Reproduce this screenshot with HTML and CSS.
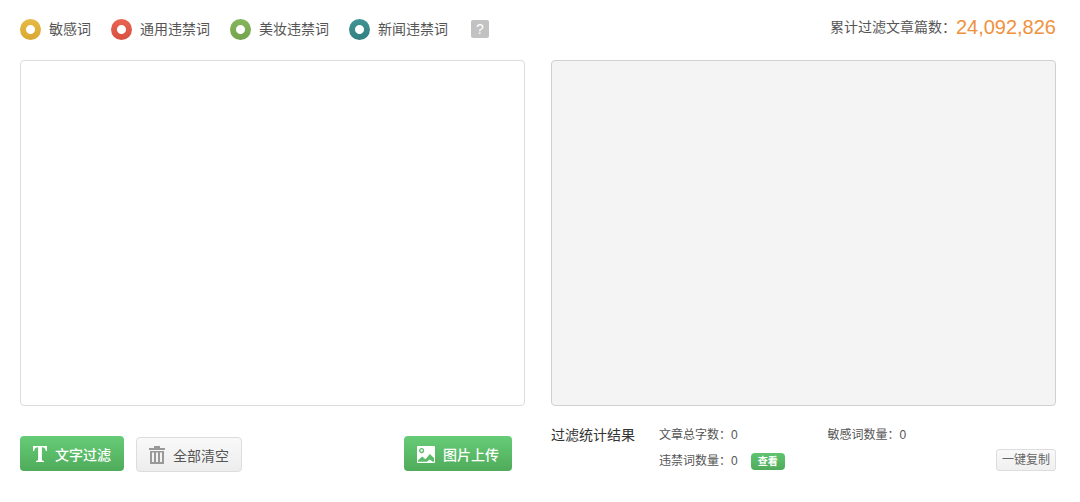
FILE: index.html
```html
<!DOCTYPE html>
<html lang="zh-CN">
<head>
    <meta charset="UTF-8">
    <title>敏感词过滤</title>
    <link rel="stylesheet" href="styles.css">
</head>
<body>
    <div class="container">
        <div class="top-bar">
            <ul class="legend">
                <li><span class="ring yellow"></span>敏感词</li>
                <li><span class="ring red"></span>通用违禁词</li>
                <li><span class="ring green"></span>美妆违禁词</li>
                <li><span class="ring teal"></span>新闻违禁词</li>
            </ul>
            <button type="button" class="help">?</button>
            <p class="total">累计过滤文章篇数：<strong>24,092,826</strong></p>
        </div>

        <div class="columns">
            <textarea class="box" id="source" aria-label="文章内容"></textarea>
            <textarea class="box box-result" id="result" aria-label="过滤结果" readonly></textarea>

            <div class="actions">
                <button type="button" class="btn btn-green">
                    <svg width="14" height="16" viewBox="0 0 14 16" fill="#fff">
                        <path d="M0 0H14V5H12.8C12.4 2.6 11.6 1.3 9.2 1.3H8.9V13C8.9 14.4 9.4 14.7 11 14.9V16H3V14.9C4.6 14.7 5.1 14.4 5.1 13V1.3H4.8C2.4 1.3 1.6 2.6 1.2 5H0Z"/>
                    </svg>
                    文字过滤
                </button>
                <button type="button" class="btn btn-gray">
                    <svg width="16" height="18" viewBox="0 0 16 18" fill="#999">
                        <path d="M5 0h6v2h5v2H0V2h5z"/>
                        <path fill-rule="evenodd" d="M1 5h14v13H1zM3 6.5v9.5h2v-9.5zM7 6.5v9.5h2v-9.5zM11 6.5v9.5h2v-9.5z"/>
                    </svg>
                    全部清空
                </button>
                <button type="button" class="btn btn-green upload">
                    <svg width="18" height="17" viewBox="0 0 18 17">
                        <rect width="18" height="17" rx="1" fill="#fff"/>
                        <circle cx="4.6" cy="4.6" r="1.9" fill="none" stroke="#5cbb6b" stroke-width="1.3"/>
                        <path d="M1 15.8V14.2L5.2 10.6L8.4 13.2L10.4 11L12.8 8L17 12V15.8H15.8L12.6 13.4L10 15.8Z" fill="#5cbb6b"/>
                    </svg>
                    图片上传
                </button>
            </div>

            <div class="stats">
                <h2>过滤统计结果</h2>
                <ul class="counts">
                    <li>文章总字数：0</li>
                    <li>敏感词数量：0</li>
                    <li>违禁词数量：0<button type="button" class="view">查看</button></li>
                </ul>
                <button type="button" class="copy">一键复制</button>
            </div>
        </div>
    </div>
</body>
</html>
```
FILE: styles.css
```css
* {
    box-sizing: border-box;
}

body {
    margin: 0;
    background-color: #fff;
    color: #555;
    font-family: "Liberation Sans", "Noto Sans CJK SC", sans-serif;
    font-size: 14px;
    line-height: 20px;
}

ul, p, h2 {
    margin: 0;
    padding: 0;
    list-style: none;
}

button {
    font-family: inherit;
    cursor: pointer;
}

.container {
    padding: 16px 24px 16px 20px;
}

/* top bar */
.top-bar {
    display: flex;
    align-items: flex-start;
    height: 44px;
}

.legend {
    display: flex;
    gap: 20px;
    padding-top: 3px;
}

.legend li {
    display: flex;
    align-items: flex-start;
    gap: 8px;
}

.ring {
    width: 21px;
    height: 21px;
    border-radius: 50%;
}

.yellow {
    background: radial-gradient(circle, #fff 4px, transparent 5px), linear-gradient(#e5bb45, #d9a732);
}

.red {
    background: radial-gradient(circle, #fff 4px, transparent 5px), linear-gradient(#e86452, #d84f40);
}

.green {
    background: radial-gradient(circle, #fff 4px, transparent 5px), linear-gradient(#86b75c, #74a24c);
}

.teal {
    background: radial-gradient(circle, #fff 4px, transparent 5px), linear-gradient(#409495, #327f80);
}

.help {
    width: 18px;
    height: 18px;
    margin: 4px 0 0 23px;
    padding: 0;
    border: none;
    border-radius: 2px;
    background-color: #c2c2c2;
    color: #fff;
    font-size: 14px;
    line-height: 18px;
}

.total {
    display: flex;
    align-items: center;
    margin-left: auto;
    line-height: 22px;
}

.total strong {
    color: #f0923c;
    font-size: 20px;
    font-weight: normal;
}

/* text boxes and what stands below them */
.columns {
    display: grid;
    grid-template-columns: 1fr 1fr;
    column-gap: 26px;
}

.box {
    display: block;
    width: 100%;
    height: 346px;
    padding: 10px;
    border: 1px solid #ddd;
    border-radius: 4px;
    background-color: #fff;
    font: inherit;
    resize: none;
    outline: none;
}

.box-result {
    border-color: #d0d0d0;
    background-color: #f4f4f4;
}

.actions {
    display: flex;
    align-items: flex-start;
    gap: 12px;
    padding: 30px 13px 0 0;
}

.btn {
    display: flex;
    align-items: center;
    gap: 8px;
    height: 35px;
    padding: 1px 13px 0;
    border: none;
    border-radius: 4px;
    font-size: 14px;
}

.btn-green {
    background: linear-gradient(#66cc77, #4fab5a);
    color: #fff;
    font-weight: 500;
}

.btn-gray {
    margin-top: 1px;
    padding: 0 12px;
    border: 1px solid #ddd;
    background: linear-gradient(#f9f9f9, #ededed);
    color: #555;
}

.upload {
    margin-left: auto;
}

.stats {
    display: flex;
    align-items: flex-start;
    padding-top: 19px;
}

.stats h2 {
    width: 108px;
    color: #333;
    font-size: 14px;
    font-weight: normal;
}

.counts {
    display: grid;
    flex: 1;
    grid-template-columns: 1fr 1fr;
    row-gap: 6px;
    font-size: 12px;
}

.counts li {
    display: flex;
    align-items: center;
}

.view {
    height: 17px;
    margin-left: 13px;
    padding: 0 7px;
    border: none;
    border-radius: 4px;
    background: linear-gradient(#5fc470, #4fab5a);
    color: #fff;
    font-size: 10px;
    font-weight: bold;
    line-height: 17px;
}

.copy {
    height: 22px;
    margin-top: 24px;
    padding: 0 5px;
    border: 1px solid #ddd;
    border-radius: 3px;
    background: linear-gradient(#f9f9f9, #f0f0f0);
    color: #666;
    font-size: 12px;
    line-height: 20px;
}
```
